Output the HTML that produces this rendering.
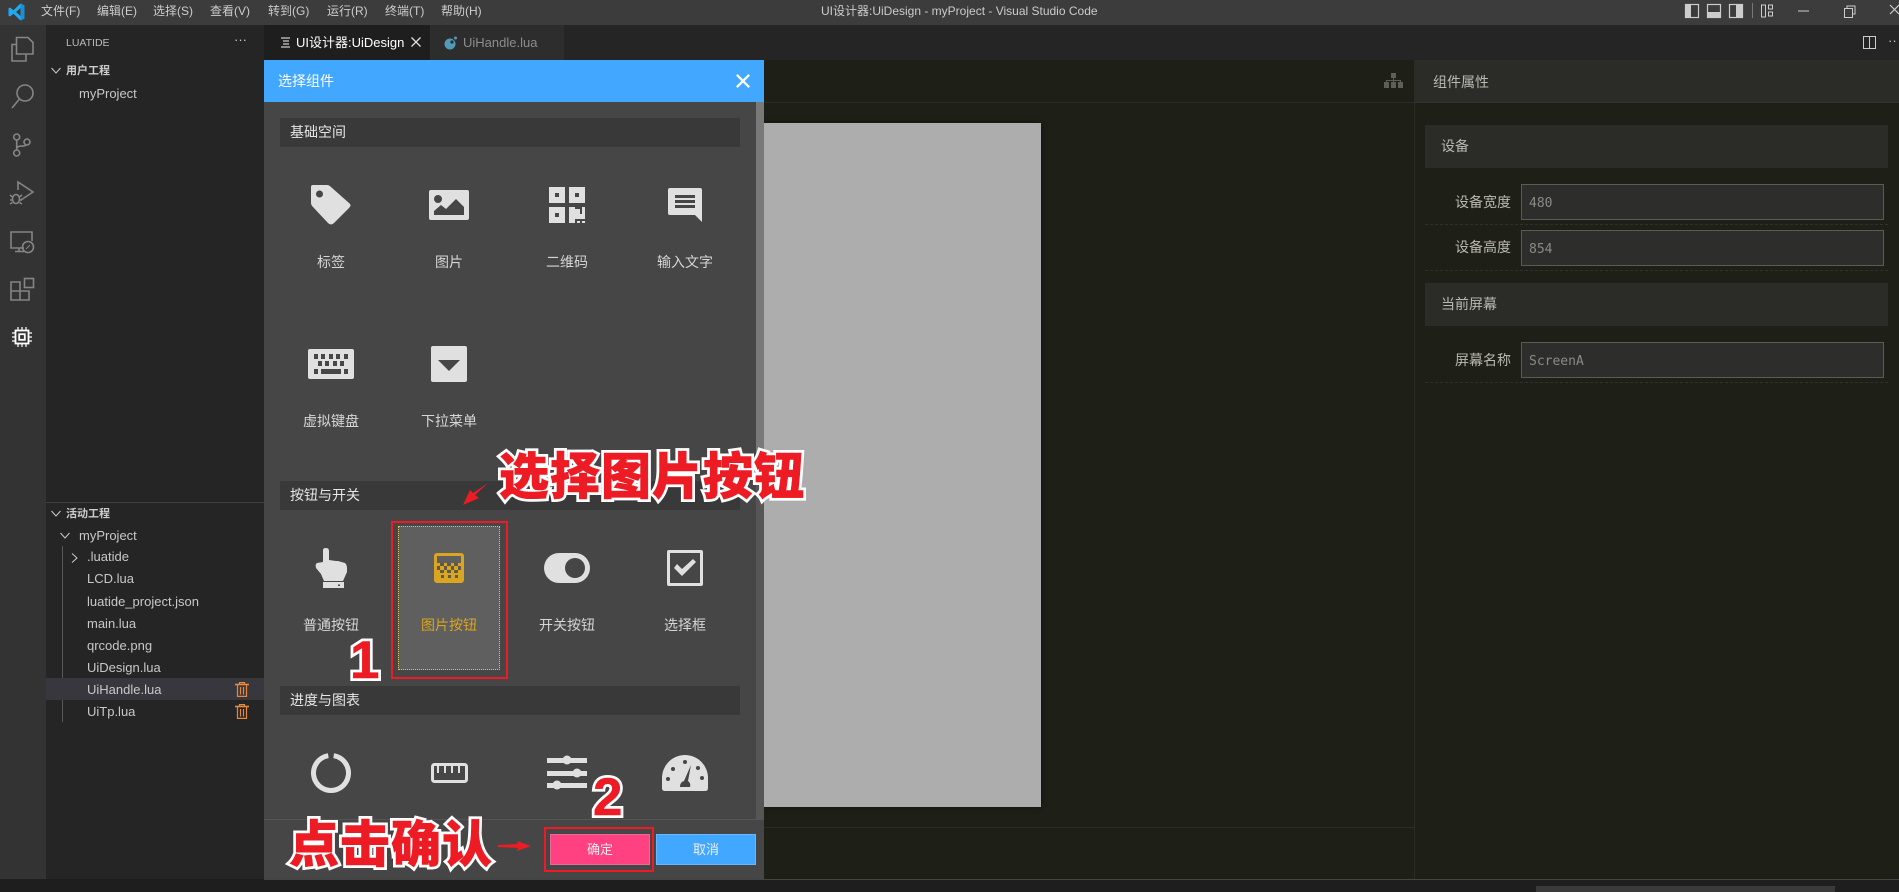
<!DOCTYPE html>
<html><head><meta charset="utf-8">
<style>
html,body{margin:0;padding:0;background:#1e1e1e}
#r{position:relative;width:1899px;height:892px;overflow:hidden;background:#1e1f17;font-family:"Liberation Sans","Noto Sans CJK SC",sans-serif;color:#ccc}
.a{position:absolute}
.t{position:absolute;white-space:nowrap;height:20px;line-height:20px}
.c{text-align:center;width:118px;font-size:14px;color:#d6d6d6}
.m{font-size:12px;color:#ccc}
.f{font-size:13px;color:#c8c8c8;left:87px}
.sec{position:absolute;left:280px;width:460px;height:29px;background:#393939;color:#e6e6e6;font-size:14px;line-height:28px;text-indent:10px}
.rs{position:absolute;left:1425px;width:463px;height:43px;background:#2b2c27;color:#b9b9b2;font-size:14px;line-height:42px;text-indent:16px}
.ip{position:absolute;left:1521px;width:361px;height:34px;background:#2d2d2b;border:1px solid #5a5a58;color:#8a8a86;font:13px/37px "DejaVu Sans Mono",monospace;text-indent:7px}
.lb{position:absolute;left:1441px;width:70px;text-align:right;font-size:14px;line-height:20px;color:#b9b9b2;white-space:nowrap}
.ds{position:absolute;left:1425px;width:463px;border-top:1px dashed #2f3029}
.an{position:absolute;white-space:nowrap;font-family:"Liberation Sans","Noto Sans CJK SC",sans-serif;font-weight:900;color:#ed1c24;-webkit-text-stroke:6px #fff;paint-order:stroke fill;line-height:1}
.an2{-webkit-text-stroke:0.5px #ed1c24}
svg{position:absolute;overflow:visible}
</style></head><body><div id="r">

<!-- title bar -->
<div class="a" style="left:0;top:0;width:1899px;height:25px;background:#3c3c3c"></div>
<svg style="left:8px;top:3px" width="17" height="18" viewBox="0 0 17 18"><path d="M12.5 0.5 16.5 2.4V15.6L12.5 17.5 5.5 10.8 2 13.5 0.5 12.6V5.4L2 4.5 5.5 7.2ZM12.5 5 8 9 12.5 13Z" fill="#23a9f2"/><path d="M12.5 0.5 16.5 2.4V15.6L12.5 17.5V13V5Z" fill="#1b8fd6"/></svg>
<div class="t m" style="left:41px;top:1px">文件(F)</div>
<div class="t m" style="left:97px;top:1px">编辑(E)</div>
<div class="t m" style="left:153px;top:1px">选择(S)</div>
<div class="t m" style="left:210px;top:1px">查看(V)</div>
<div class="t m" style="left:268px;top:1px">转到(G)</div>
<div class="t m" style="left:327px;top:1px">运行(R)</div>
<div class="t m" style="left:385px;top:1px">终端(T)</div>
<div class="t m" style="left:441px;top:1px">帮助(H)</div>
<div class="t m" style="left:821px;top:1px">UI设计器:UiDesign - myProject - Visual Studio Code</div>
<!-- layout icons -->
<svg style="left:1684px;top:3px" width="215" height="18" viewBox="0 0 215 18" fill="none" stroke="#ccc">
<rect x="1.5" y="1.5" width="13" height="13" stroke-width="1.2"/><rect x="1" y="1" width="6" height="14" fill="#ccc" stroke="none"/>
<rect x="23.5" y="1.5" width="13" height="13" stroke-width="1.2"/><rect x="23" y="9" width="14" height="6" fill="#ccc" stroke="none"/>
<rect x="45.5" y="1.5" width="13" height="13" stroke-width="1.2"/><rect x="52" y="1" width="7" height="14" fill="#ccc" stroke="none"/>
<path d="M68.5 0V15" stroke="#777"/>
<rect x="77.5" y="2" width="4" height="12"/><rect x="84.5" y="2" width="4" height="4"/><rect x="84.5" y="9" width="4" height="4"/>
<path d="M114 8H125"/>
<rect x="160.5" y="5.5" width="8" height="9"/><path d="M163 5V3H171V11H168.5"/>
<path d="M206 2 215 11M215 2 206 11" stroke-width="1.2"/>
</svg>

<!-- activity bar -->
<div class="a" style="left:0;top:25px;width:46px;height:867px;background:#333"></div>
<svg style="left:0;top:25px" width="46" height="330" viewBox="0 0 46 330" fill="none" stroke="#858585" stroke-width="1.6">
<path d="M16.500 12.500H28L33 17.500V29H16.500ZM16.500 19.500H12V36H26V29"/>
<circle cx="25" cy="68" r="8"/><path d="M19.500 74 12 83"/>
<circle cx="16.700" cy="112" r="3"/><circle cx="16.700" cy="128" r="3"/><circle cx="27" cy="117" r="3"/><path d="M16.700 115V125M16.700 123C17.500 120 25 122 26 120"/>
<path d="M18 165V157L33 167 21 175"/><ellipse cx="16" cy="174" rx="3.500" ry="4.500"/><path d="M10 170 12.500 172M22 170 19.500 172M10 175H12.500M22 175H19.500M10 179 12.500 177.500M22 179 19.500 177.500"/>
<path d="M24 223H11V207H32V216M15 226.500H24M19 223V226"/><circle cx="28" cy="222" r="5.500"/><path d="M26 224 30 220" stroke-width="1"/>
<path d="M11 257H20V275H11ZM11 266H29V275H20M20 257V266"/><rect x="24.500" y="253.500" width="9" height="9"/>
</svg>
<svg style="left:12px;top:327px" width="20" height="20" viewBox="0 0 20 20" fill="none" stroke="#fff" stroke-width="1.8">
<rect x="3.5" y="3.5" width="13" height="13"/><rect x="7.2" y="7.2" width="5.6" height="5.6"/>
<path d="M6 0V3M10 0V3M14 0V3M6 17V20M10 17V20M14 17V20M0 6H3M0 10H3M0 14H3M17 6H20M17 10H20M17 14H20" stroke-width="1.2"/>
</svg>

<!-- sidebar -->
<div class="a" style="left:46px;top:25px;width:218px;height:867px;background:#252526"></div>
<div class="t" style="left:66px;top:33px;font-size:10.5px;color:#bbb">LUATIDE</div>
<div class="t" style="left:234px;top:30px;font-size:13px;color:#ccc;letter-spacing:0">···</div>
<svg style="left:51px;top:67px" width="10" height="8" fill="none" stroke="#ccc" stroke-width="1"><path d="M0.5 1 5 6 9.500 1"/></svg>
<div class="t" style="left:66px;top:61px;font-size:11px;font-weight:bold;color:#ccc">用户工程</div>
<div class="t" style="left:79px;top:84px;font-size:13px;color:#c8c8c8">myProject</div>
<div class="a" style="left:46px;top:502px;width:218px;height:1px;background:#3f3f3f"></div>
<svg style="left:51px;top:510px" width="10" height="8" fill="none" stroke="#ccc" stroke-width="1"><path d="M0.5 1 5 6 9.500 1"/></svg>
<div class="t" style="left:66px;top:504px;font-size:11px;font-weight:bold;color:#ccc">活动工程</div>
<svg style="left:60px;top:532px" width="10" height="8" fill="none" stroke="#ccc" stroke-width="1"><path d="M0.5 1 5 6 9.500 1"/></svg>
<div class="t" style="left:79px;top:526px;font-size:13px;color:#c8c8c8">myProject</div>
<div class="a" style="left:62px;top:546px;width:1px;height:176px;background:#585858"></div>
<svg style="left:71px;top:553px" width="8" height="10" fill="none" stroke="#ccc" stroke-width="1"><path d="M1 0.500 6 5 1 9.500"/></svg>
<div class="a" style="left:46px;top:678px;width:218px;height:22px;background:#37373d"></div>
<div class="t f" style="top:547px">.luatide</div>
<div class="t f" style="top:569px">LCD.lua</div>
<div class="t f" style="top:592px">luatide_project.json</div>
<div class="t f" style="top:614px">main.lua</div>
<div class="t f" style="top:636px">qrcode.png</div>
<div class="t f" style="top:658px">UiDesign.lua</div>
<div class="t f" style="top:680px">UiHandle.lua</div>
<div class="t f" style="top:702px">UiTp.lua</div>
<svg style="left:235px;top:682px" width="14" height="15" viewBox="0 0 14 15" fill="none" stroke="#e8883a" stroke-width="1.2"><path d="M0 2.500H14" stroke-width="1.6"/><path d="M4.500 2V.6H9.500V2M2.500 3V14.400H11.500V3M5.500 5V12.500M8.500 5V12.500"/></svg>
<svg style="left:235px;top:704px" width="14" height="15" viewBox="0 0 14 15" fill="none" stroke="#e8883a" stroke-width="1.2"><path d="M0 2.500H14" stroke-width="1.6"/><path d="M4.500 2V.6H9.500V2M2.500 3V14.400H11.500V3M5.500 5V12.500M8.500 5V12.500"/></svg>

<!-- tabs -->
<div class="a" style="left:264px;top:25px;width:1635px;height:35px;background:#252526"></div>
<div class="a" style="left:264px;top:25px;width:166px;height:35px;background:#1e1e1e"></div>
<div class="a" style="left:430px;top:25px;width:134px;height:35px;background:#2d2d2d"></div>
<svg style="left:281px;top:37px" width="10" height="12" stroke="#ccc" stroke-width="1.300"><path d="M0 1H9M2 4H8M2 7H8M0 10H9"/></svg>
<div class="t" style="left:296px;top:33px;font-size:13px;color:#fff">UI设计器:UiDesign</div>
<svg style="left:411px;top:37px" width="10" height="10" fill="none" stroke="#ddd" stroke-width="1.300"><path d="M.5 .5 9.500 9.500M9.500 .5 .5 9.500"/></svg>
<svg style="left:444px;top:36px" width="14" height="14"><circle cx="6" cy="8" r="5.500" fill="#519aba"/><circle cx="8" cy="6" r="1.600" fill="#2d2d2d"/><circle cx="11.500" cy="2" r="1.500" fill="#519aba"/></svg>
<div class="t" style="left:463px;top:33px;font-size:13px;color:#8d8d8d">UiHandle.lua</div>
<svg style="left:1863px;top:36px" width="14" height="14" fill="none" stroke="#ccc" stroke-width="1"><rect x=".5" y=".5" width="12" height="12"/><path d="M6.500 .5V12.500"/></svg>
<div class="t" style="left:1888px;top:31px;font-size:13px;color:#ccc">··</div>

<!-- editor -->
<div class="a" style="left:264px;top:60px;width:1150px;height:42px;background:#1e1f17"></div>
<div class="a" style="left:264px;top:102px;width:1150px;height:1px;background:#2b2c25"></div>
<div class="a" style="left:264px;top:827px;width:1150px;height:1px;background:#2b2c25"></div>
<div class="a" style="left:1414px;top:60px;width:1px;height:819px;background:#2b2c25"></div>
<div class="a" style="left:600px;top:123px;width:441px;height:684px;background:#adadad;box-shadow:0 0 6px rgba(0,0,0,.4)"></div>
<svg style="left:1384px;top:73px" width="19" height="15" fill="#5f5f59"><rect x="7" y="0" width="5" height="5"/><rect x="0" y="9" width="5" height="6"/><rect x="7" y="9" width="5" height="6"/><rect x="14" y="9" width="5" height="6"/><path d="M9 5H10V7H17V9H16V8H10V9H9V8H3V9H2V7H9Z"/></svg>
<div class="a" style="left:0;top:879px;width:1899px;height:13px;background:#1e1e1e"></div>
<div class="a" style="left:264px;top:879px;width:1635px;height:1px;background:#444"></div>
<div class="a" style="left:1536px;top:886px;width:299px;height:6px;background:#3a3a3a"></div>

<!-- right panel -->
<div class="a" style="left:1414px;top:60px;width:485px;height:42px;background:#2b2c27"></div>
<div class="a" style="left:1414px;top:102px;width:485px;height:1px;background:#33342f"></div>
<div class="t" style="left:1433px;top:72px;font-size:14px;color:#b9b9b2">组件属性</div>
<div class="rs" style="top:125px">设备</div>
<div class="lb" style="top:192px">设备宽度</div>
<div class="ip" style="top:184px">480</div>
<div class="ds" style="top:224px"></div>
<div class="lb" style="top:237px">设备高度</div>
<div class="ip" style="top:230px">854</div>
<div class="ds" style="top:270px"></div>
<div class="rs" style="top:283px">当前屏幕</div>
<div class="lb" style="top:350px">屏幕名称</div>
<div class="ip" style="top:342px">ScreenA</div>
<div class="ds" style="top:382px"></div>

<!-- dialog -->
<div class="a" style="left:264px;top:60px;width:500px;height:819px;background:#464646;overflow:hidden"></div>
<div class="a" style="left:756px;top:102px;width:8px;height:717px;background:#797979"></div>
<div class="a" style="left:756px;top:480px;width:8px;height:339px;background:#565656"></div>
<div class="a" style="left:264px;top:60px;width:500px;height:42px;background:#42a8ff"></div>
<div class="t" style="left:278px;top:71px;font-size:14px;color:#fff">选择组件</div>
<svg style="left:736px;top:74px" width="14" height="14" fill="none" stroke="#fff" stroke-width="2.200"><path d="M.8 .8 13.200 13.200M13.200 .8 .8 13.200"/></svg>

<div class="sec" style="top:118px">基础空间</div>
<div class="sec" style="top:481px">按钮与开关</div>
<div class="sec" style="top:686px">进度与图表</div>

<!-- icons -->
<svg style="left:0;top:0" width="800" height="820" fill="#e0e0e0">
<path fill-rule="evenodd" d="M313 185H327Q329 185 331 187L349 203Q352 205 349 208L334 223Q331 226 328 223L313 207Q311 205 311 203V187Q311 185 313 185ZM319.500 190.500A3.500 3.500 0 1 0 319.500 197.500A3.500 3.500 0 1 0 319.500 190.500Z"/>
<path fill-rule="evenodd" d="M431 190H467Q469 190 469 192V218Q469 220 467 220H431Q429 220 429 218V192Q429 190 431 190ZM438 195A4 4 0 1 0 438 203A4 4 0 1 0 438 195ZM434 215H464V207L456 199 446 209 441 205 434 211Z"/>
<g>
<path fill-rule="evenodd" d="M549 187H565V203H549ZM555 193V197H559V193Z"/>
<path fill-rule="evenodd" d="M569 187H585V203H569ZM575 193V197H579V193Z"/>
<path fill-rule="evenodd" d="M549 207H565V223H549ZM555 213V217H559V213Z"/>
<path d="M569 207H575V209H580V214H582V207H585V219H575V223H569ZM577 221H580V223H577ZM582 221H585V223H582Z"/>
</g>
<path fill-rule="evenodd" d="M668 190Q668 188 670 188H700Q702 188 702 190V222L695 215H670Q668 215 668 213ZM675 195V198H695V195ZM675 200V203H695V200ZM675 205V208H695V205Z"/>
<path fill-rule="evenodd" d="M310 349H352Q354 349 354 351V377Q354 379 352 379H310Q308 379 308 377V351Q308 349 310 349ZM314 354V359H318V354ZM321 354V359H325V354ZM329 354V359H333V354ZM336 354V359H340V354ZM344 354V359H348V354ZM318 361V366H322V361ZM325 361V366H329V361ZM333 361V366H337V361ZM340 361V366H344V361ZM314 369V374H318V369ZM321 369V374H341V369ZM344 369V374H348V369Z"/>
<path fill-rule="evenodd" d="M433 346H465Q467 346 467 348V380Q467 382 465 382H433Q431 382 431 380V348Q431 346 433 346ZM438 360 449 371 460 360Z"/>

<!-- hand -->
<path fill-rule="evenodd" d="M323 550Q323 548 326 548Q329 548 329 551V560L336 561 338 561 345 563Q347 565 347 568V572L343 581H324L321 574 316 568Q315 564 317 563L323 562ZM323 582H344V588H323ZM338 584.500V586H340V584.500Z"/>
<!-- toggle -->
<path fill-rule="evenodd" d="M559 553H575A15 15 0 0 1 575 583H559A15 15 0 0 1 559 553ZM575 558A10 10 0 1 0 575 578A10 10 0 1 0 575 558Z"/>
<!-- checkbox -->
<path fill-rule="evenodd" d="M669 550H701Q703 550 703 552V584Q703 586 701 586H669Q667 586 667 584V552Q667 550 669 550ZM670 553V583H700V553Z"/>
<path d="M674 568 677 564 682 569 693 559 696 562 682 576Z"/>
<!-- gauge -->
<path fill-rule="evenodd" d="M685 755A23 23 0 0 1 708 778V788Q708 791 705 791H665Q662 791 662 788V778A23 23 0 0 1 685 755ZM685 760A2 2 0 1 0 685 764A2 2 0 1 0 685 760ZM673 767A2 2 0 1 0 673 771A2 2 0 1 0 673 767ZM698 766A2 2 0 1 0 698 770A2 2 0 1 0 698 766ZM668 777A2 2 0 1 0 668 781A2 2 0 1 0 668 777ZM702 776A2 2 0 1 0 702 780A2 2 0 1 0 702 776ZM691 765 684 781Q680 782 680 787H690Q691 783 688 781Z"/>
<!-- sliders -->
<path d="M547 758H587V763H547ZM547 771H587V776H547ZM547 783H587V788H547Z"/>
<circle cx="567" cy="760" r="4.500"/><circle cx="577" cy="773" r="4.500"/><circle cx="557" cy="785" r="4.500"/>
</svg>
<svg style="left:0;top:0" width="800" height="820" fill="none" stroke="#e0e0e0">
<path d="M333.700 755.700A17.500 17.500 0 1 1 328.300 755.700" stroke-width="5"/>
<rect x="432.500" y="764.500" width="34" height="17" rx="2" stroke-width="3"/>
<path d="M438 765V773M445 765V773M452 765V773M459 765V773" stroke-width="2"/>
</svg>

<div class="t c" style="left:272px;top:252px">标签</div>
<div class="t c" style="left:390px;top:252px">图片</div>
<div class="t c" style="left:508px;top:252px">二维码</div>
<div class="t c" style="left:626px;top:252px">输入文字</div>
<div class="t c" style="left:272px;top:411px">虚拟键盘</div>
<div class="t c" style="left:390px;top:411px">下拉菜单</div>

<!-- selected -->
<div class="a" style="left:398px;top:526px;width:100px;height:142px;background:#5f5f5f;border:1px dotted #e8c23a"></div>
<div class="a" style="left:391px;top:521px;width:113px;height:154px;border:2px solid #ed1c24"></div>
<svg style="left:434px;top:553px" width="30" height="30"><rect width="30" height="30" rx="3" fill="#daa520"/><rect x="3" y="3" width="24" height="7" fill="#5f5f5f"/><path d="M6 10h4v3H6zM13 10h4v3h-4zM20 10h4v3h-4zM3 13h3v4H3zM10 13h3v4h-3zM17 13h3v4h-3zM24 13h3v4h-3zM6 17h4v3H6zM13 17h4v3h-4zM20 17h4v3h-4zM7 22h3v3H7zM14 22h3v3h-3zM21 22h3v3h-3z" fill="#5f5a48"/></svg>
<div class="t c" style="left:272px;top:615px">普通按钮</div>
<div class="t c" style="left:390px;top:615px;color:#daa520">图片按钮</div>
<div class="t c" style="left:508px;top:615px">开关按钮</div>
<div class="t c" style="left:626px;top:615px">选择框</div>

<!-- footer -->
<div class="a" style="left:264px;top:819px;width:500px;height:60px;background:#464646;border-top:1px solid #555;box-sizing:border-box"></div>
<div class="a" style="left:550px;top:834px;width:100px;height:31px;background:#ff4081;border:1px solid #e96a96;box-sizing:border-box;text-align:center;font-size:13px;line-height:29px;color:#eee">确定</div>
<div class="a" style="left:656px;top:834px;width:100px;height:31px;background:#42a8ff;border:1px solid #66b8ff;box-sizing:border-box;text-align:center;font-size:13px;line-height:29px;color:#eee">取消</div>
<div class="a" style="left:544px;top:827px;width:106px;height:41px;border:2px solid #ed1c24"></div>

<!-- annotations -->
<div class="an" style="left:499px;top:452px;font-size:50px;letter-spacing:1px">选择图片按钮</div>
<div class="an an2" style="left:499px;top:452px;font-size:50px;letter-spacing:1px" aria-hidden="true">选择图片按钮</div>
<div class="an" style="left:289px;top:820px;font-size:50px;letter-spacing:1px">点击确认</div>
<div class="an an2" style="left:289px;top:820px;font-size:50px;letter-spacing:1px" aria-hidden="true">点击确认</div>
<div class="an" style="left:350px;top:634px;font-size:53px;">1</div>
<div class="an an2" style="left:350px;top:634px;font-size:53px;" aria-hidden="true">1</div>
<div class="an" style="left:593px;top:771px;font-size:53px;">2</div>
<div class="an an2" style="left:593px;top:771px;font-size:53px;" aria-hidden="true">2</div>
<svg style="left:0;top:0" width="800" height="880">
<path d="M488 483 475 495 479 498 463 505 470 490 473 493Z" fill="#ed1c24"/>
<path d="M498 845 518 844 517 841 531 846 517 851 518 848 498 847Z" fill="#ed1c24"/>
</svg>
</div></body></html>
